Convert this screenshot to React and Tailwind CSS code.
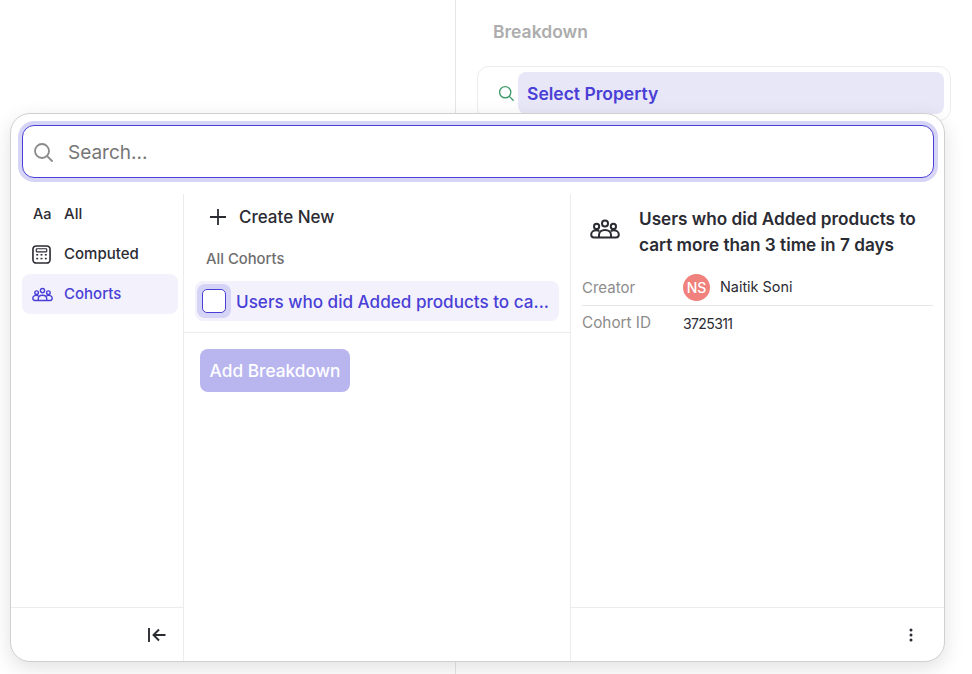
import React from "react";

function CohortIcon({ className }) {
  return (
    <svg viewBox="0 0 30 20" fill="none" stroke="currentColor" strokeWidth="2" className={className}>
      <circle cx="15" cy="4.400" r="3" />
      <circle cx="6.600" cy="7.400" r="2.600" />
      <circle cx="23.400" cy="7.400" r="2.600" />
      <path d="M9 18.500v-2.500c0-3 2.500-5 6-5s6 2 6 5v2.500" />
      <path d="M9.200 12.200c-.8-.7-1.700-1-2.700-1C3.400 11.200 1.200 13 1.200 15.500c0 1.900 1 3 2.800 3h22c1.800 0 2.800-1.100 2.800-3 0-2.500-2.200-4.300-5.300-4.300-1 0-1.900.3-2.700 1" />
    </svg>
  );
}

function CalcIcon() {
  return (
    <svg viewBox="0 0 20 20" fill="none" className="w-[19px] h-[19px]">
      <rect x="1" y="1" width="18" height="18" rx="3.500" stroke="currentColor" strokeWidth="1.700" />
      <rect x="4.500" y="4" width="11" height="3.200" rx=".6" stroke="currentColor" strokeWidth="1.200" />
      <g fill="currentColor">
        <rect x="4.500" y="9.500" width="2" height="1.600" />
        <rect x="9" y="9.500" width="2" height="1.600" />
        <rect x="13.500" y="9.500" width="2" height="1.600" />
        <rect x="4.500" y="13.500" width="2" height="1.600" />
        <rect x="9" y="13.500" width="2" height="1.600" />
        <rect x="13.500" y="13.500" width="2" height="1.600" />
      </g>
    </svg>
  );
}

function SearchIcon({ className, sw = 1.8 }) {
  return (
    <svg viewBox="0 0 20 20" fill="none" stroke="currentColor" strokeWidth={sw} strokeLinecap="round" className={className}>
      <circle cx="9" cy="9" r="7" />
      <path d="M14.200 14.200L19 19" />
    </svg>
  );
}

export default function App() {
  return (
    <div className="relative w-[972px] h-[674px] overflow-hidden bg-white font-['Inter','Noto_Sans',sans-serif] text-[#2b2b33]">
      {/* background page */}
      <div className="ml-[455px] w-[517px] h-full border-l border-[#e6e6e6] pl-[21px] pt-[21px]">
        <div className="ml-[16px] text-[17.500px] leading-[22px] font-semibold text-[#adadad]">Breakdown</div>
        <div className="mt-[23px] w-[474px] h-[55px] rounded-[12px] border border-[#ececec] flex items-center pl-[20px] pr-[6px]">
          <SearchIcon className="w-[16px] h-[16px] text-[#3f9a6b] -mt-[2px]" sw={1.700} />
          <div className="ml-[4px] -mt-[1px] flex-1 h-[42px] rounded-[8px] bg-[#e8e7f8] flex items-center pl-[9px] pt-[2px] text-[#4a3fd6] text-[17.500px] font-semibold">Select Property</div>
        </div>
      </div>

      {/* popover */}
      <div className="absolute left-[10px] top-[113px] w-[935px] h-[549px] rounded-[20px] bg-white border border-[#d0d0d0] shadow-[0_6px_20px_rgba(0,0,0,0.12)] flex flex-col">
        <div className="pt-[7px] pl-[7px] pr-[6px]">
          <div className="p-[4px] rounded-[16px] bg-[#d6d5f5]">
            <div className="h-[53px] rounded-[12px] bg-white border border-[#4a3fd6] flex items-center pl-[10px]">
              <SearchIcon className="w-[20px] h-[20px] text-[#8a8a8a]" />
              <span className="ml-[15px] pt-[4px] text-[19px] text-[#767676]">Search...</span>
            </div>
          </div>
        </div>

        <div className="mt-[12px] flex-1 flex min-h-0">
          {/* left column */}
          <div className="w-[173px] border-r border-[#ececec] flex flex-col">
            <div className="flex-1 pl-[11px] pr-[5px]">
              <div className="h-[40px] flex items-center px-[11px] text-[15px] font-medium">
                <span className="w-[20px] text-[14.500px]">Aa</span>
                <span className="ml-[11px]">All</span>
              </div>
              <div className="h-[40px] flex items-center px-[10px] text-[15px] font-medium">
                <CalcIcon />
                <span className="ml-[13px]">Computed</span>
              </div>
              <div className="h-[40px] flex items-center px-[10px] rounded-[8px] bg-[#f3f2fc] text-[#4a3fd6] text-[15px] font-medium">
                <CohortIcon className="w-[21px] h-[15px]" />
                <span className="ml-[11px]">Cohorts</span>
              </div>
            </div>
            <div className="h-[54px] border-t border-[#ececec] flex items-center justify-end pr-[17px]">
              <svg viewBox="0 0 18 14" fill="none" stroke="currentColor" strokeWidth="1.900" className="w-[18px] h-[14px]">
                <path d="M1 0v14" />
                <path d="M17.500 7H5.500M11 1.500L5.500 7l5.500 5.500" />
              </svg>
            </div>
          </div>

          {/* middle column */}
          <div className="w-[387px] border-r border-[#ececec] flex flex-col">
            <div className="h-[46px] flex items-center pl-[26px] text-[17px] font-medium">
              <svg viewBox="0 0 16 16" fill="none" stroke="currentColor" strokeWidth="1.800" className="w-[16px] h-[16px]">
                <path d="M8 0v16M0 8h16" />
              </svg>
              <span className="ml-[13px] pt-[1px]">Create New</span>
            </div>
            <div className="pl-[22px] mt-[9px] text-[14.800px] leading-[20px] text-[#6e6e6e] font-medium">All Cohorts</div>
            <div className="mt-[12px] ml-[11px] w-[364px] h-[40px] rounded-[8px] bg-[#f3f2fc] flex items-center pl-[2px]">
              <div className="w-[34px] h-[34px] rounded-[8px] bg-[#d5d3f6] flex items-center justify-center shrink-0">
                <div className="w-[24px] h-[24px] rounded-[5px] bg-white border border-[#4a3fd6]"></div>
              </div>
              <span className="ml-[5px] pt-[2px] text-[17.100px] font-medium text-[#4a3fd6] whitespace-nowrap">Users who did Added products to ca...</span>
            </div>
            <div className="mt-[11px] border-t border-[#ececec] pl-[16px] pt-[16px]">
              <button className="w-[150px] h-[43px] rounded-[8px] bg-[#b9b5ef] text-white text-[17.300px] font-medium">Add Breakdown</button>
            </div>
          </div>

          {/* right column */}
          <div className="flex-1 flex flex-col">
            <div className="flex-1">
              <div className="flex pl-[19px] pt-[12px]">
                <CohortIcon className="w-[30px] h-[20px] mt-[13px] text-[#2b2b33]" />
                <div className="ml-[19px] text-[17.200px] leading-[26px] font-semibold whitespace-nowrap">Users who did Added products to<br />cart more than 3 time in 7 days</div>
              </div>
              <div className="mx-[11px] mt-[16px] h-[32px] border-b border-[#e6e6e6] flex items-start text-[15px]">
                <span className="w-[101px] mt-[3px] text-[#8c8c8c]">Creator</span>
                <span className="w-[27px] h-[27px] rounded-full bg-[#f0817c] text-white text-[14px] font-medium flex items-center justify-center">NS</span>
                <span className="ml-[10px] mt-[3px] text-[14.400px] leading-[20px]">Naitik Soni</span>
              </div>
              <div className="mx-[11px] mt-[6px] flex items-center text-[15.300px]">
                <span className="w-[101px] text-[#8c8c8c]">Cohort ID</span>
                <span className="text-[14px] tracking-[-0.6px]">3725311</span>
              </div>
            </div>
            <div className="h-[54px] border-t border-[#ececec] flex items-center justify-end pr-[31px]">
              <svg viewBox="0 0 4 14" fill="currentColor" className="w-[4px] h-[14px]">
                <circle cx="2" cy="2" r="1.500" />
                <circle cx="2" cy="7" r="1.500" />
                <circle cx="2" cy="12" r="1.500" />
              </svg>
            </div>
          </div>
        </div>
      </div>
    </div>
  );
}
